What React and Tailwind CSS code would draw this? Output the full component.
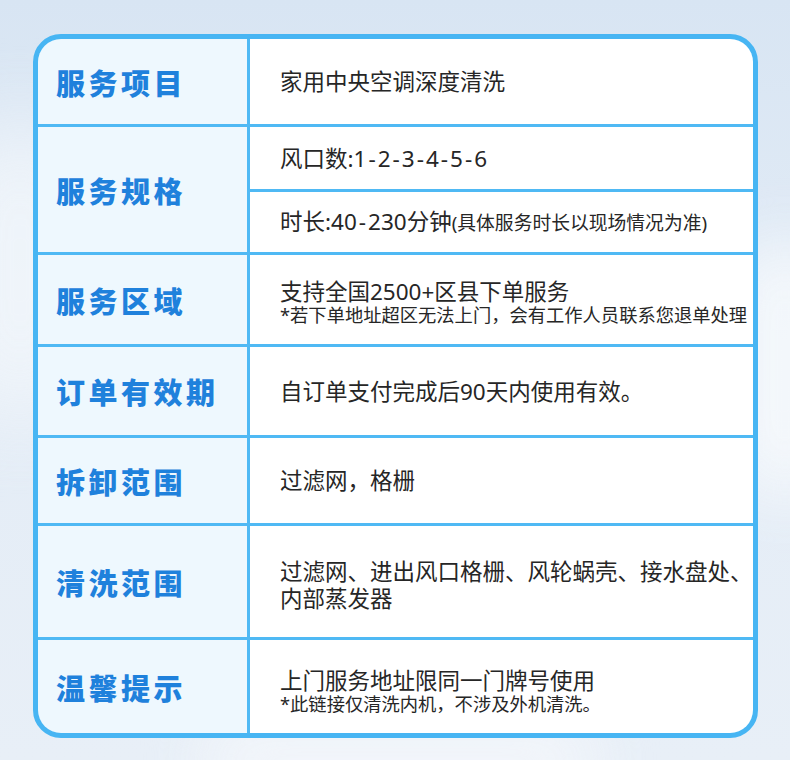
import React from "react";

const FONT = { fontFamily: '"Noto Sans", "Noto Sans CJK SC", sans-serif' };

function Label({ children, className = "" }) {
  return (
    <div className={"bg-[#eef8fe] flex items-center pl-[18px] " + className}>
      <span
        className="text-[29px] leading-[32px] font-black tracking-[3.5px] text-[#1f81dc]"
        style={{ fontFamily: '"Noto Sans CJK SC", sans-serif' }}
      >
        {children}
      </span>
    </div>
  );
}

function Value({ children, className = "" }) {
  return <div className={"bg-white flex flex-col justify-center pl-[30px] text-[#262626] " + className}>{children}</div>;
}

function H() {
  return <span className="mx-[2px]">-</span>;
}

const main = "text-[22.5px] leading-[25px]";
const small = "text-[18.3px] leading-[21px]";

export default function App() {
  return (
    <div
      className="relative w-[790px] h-[760px] overflow-hidden bg-[linear-gradient(180deg,#d8e5f3_0%,#e3ecf6_45%,#e8eff7_100%)]"
      style={FONT}
    >
      <div className="absolute -left-[60px] top-[120px] w-[160px] h-[300px] rounded-full bg-[#f3f7fb] blur-[40px] opacity-80" />
      <div className="absolute right-[-50px] top-[240px] w-[110px] h-[260px] rounded-full bg-[#f6f9fc] blur-[30px] opacity-90" />
      <div className="absolute left-[200px] bottom-[-40px] w-[400px] h-[80px] rounded-full bg-[#f4f7fb] blur-[30px] opacity-90" />
      <div className="relative pt-[34px] pl-[33px]">
        <div className="w-[725px] rounded-[28px] border-[5px] border-[#47b5f3] overflow-hidden bg-[#4fb9f4]">
          <div className="grid grid-cols-[209px_503px] grid-rows-[85px_62px_60px_89px_88px_85px_111px_93px] gap-[3px]">
            <Label>服务项目</Label>
            <Value>
              <div className={main}>家用中央空调深度清洗</div>
            </Value>

            <Label className="row-span-2">服务规格</Label>
            <Value>
              <div className={main}>
                风口数:1<H />2<H />3<H />4<H />5<H />6
              </div>
            </Value>
            <Value>
              <div className={main}>
                时长:40<H />230分钟<span className="text-[18.8px]">(具体服务时长以现场情况为准)</span>
              </div>
            </Value>

            <Label>服务区域</Label>
            <Value className="pt-[4px]">
              <div className={main}>支持全国2500+区县下单服务</div>
              <div className={small}>*若下单地址超区无法上门，会有工作人员联系您退单处理</div>
            </Value>

            <Label>订单有效期</Label>
            <Value>
              <div className={main}>自订单支付完成后90天内使用有效。</div>
            </Value>

            <Label>拆卸范围</Label>
            <Value>
              <div className={main}>过滤网，格栅</div>
            </Value>

            <Label>清洗范围</Label>
            <Value className="pt-[6px]">
              <div className="text-[22.5px] leading-[27px]">过滤网、进出风口格栅、风轮蜗壳、接水盘处、</div>
              <div className="text-[22.5px] leading-[27px]">内部蒸发器</div>
            </Value>

            <Label>温馨提示</Label>
            <Value className="pt-[8px]">
              <div className={main}>上门服务地址限同一门牌号使用</div>
              <div className={small}>*此链接仅清洗内机，不涉及外机清洗。</div>
            </Value>
          </div>
        </div>
      </div>
    </div>
  );
}
